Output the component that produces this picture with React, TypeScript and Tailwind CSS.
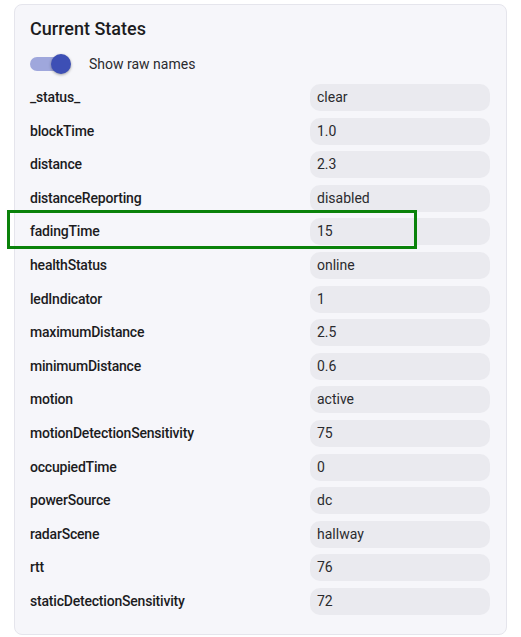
import React from "react";

const rows: [string, string][] = [
  ["_status_", "clear"],
  ["blockTime", "1.0"],
  ["distance", "2.3"],
  ["distanceReporting", "disabled"],
  ["fadingTime", "15"],
  ["healthStatus", "online"],
  ["ledIndicator", "1"],
  ["maximumDistance", "2.5"],
  ["minimumDistance", "0.6"],
  ["motion", "active"],
  ["motionDetectionSensitivity", "75"],
  ["occupiedTime", "0"],
  ["powerSource", "dc"],
  ["radarScene", "hallway"],
  ["rtt", "76"],
  ["staticDetectionSensitivity", "72"],
];

export default function App() {
  return (
    <div
      className="relative w-[521px] h-[637px] bg-white pt-[4px] pl-[14px]"
      style={{ fontFamily: "Roboto, 'Noto Sans', sans-serif" }}
    >
      <div className="w-[493px] h-[631px] rounded-[8px] border border-[#e5e5ec] bg-[#f6f6fa] pl-[15px] pr-[15px] pt-[13px]">
        <h2 className="text-[18px] leading-[22px] font-medium text-[#1c1c1e]">Current States</h2>
        <div className="mt-[12px] flex items-center h-[24px]">
          <div className="relative w-[36px] h-[14px] ml-[0px] rounded-full bg-[#9fa7dc]">
            <div className="absolute right-[-5px] top-[-3px] w-[20px] h-[20px] rounded-full bg-[#3d4fb5] shadow-[0_1px_3px_rgba(0,0,0,0.35)]" />
          </div>
          <span className="ml-[23px] text-[14px] text-[#2a2a2e]">Show raw names</span>
        </div>
        <div className="mt-[8px] flex flex-col gap-[6.6px]">
          {rows.map(([k, v]) => (
            <div key={k} className="flex items-center h-[27px]">
              <div className="flex-1 text-[14px] font-medium text-[#1c1c1e] tracking-[-0.2px]">{k}</div>
              <div className="w-[180px] h-[27px] mr-[1px] rounded-[10px] bg-[#eaeaef] flex items-center pl-[7px] text-[14px] text-[#2a2a2e]">
                {v}
              </div>
            </div>
          ))}
        </div>
      </div>
      <div className="absolute left-[7px] top-[210px] w-[410px] h-[39px] border-[3px] border-[#0a820a]" />
    </div>
  );
}
